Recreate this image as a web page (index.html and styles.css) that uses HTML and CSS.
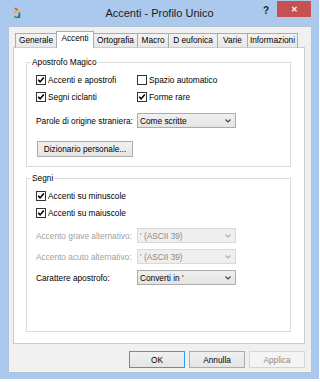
FILE: index.html
```html
<!DOCTYPE html>
<html lang="it">
<head>
    <meta charset="UTF-8">
    <meta name="viewport" content="width=device-width, initial-scale=1.0">
    <title>Accenti - Profilo Unico</title>
    <link rel="stylesheet" href="styles.css">
</head>
<body>
    <div class="window">
        <div class="titlebar">
            <svg class="app-icon" width="8" height="12" viewBox="0 0 8 12">
                <path d="M2 1 L4.5 3" stroke="#d83a2a" stroke-width="1.4" fill="none"/>
                <path d="M1.5 6.5 A2.6 2.6 0 1 1 6.5 7.5" stroke="#e8b020" stroke-width="1.6" fill="none"/>
                <path d="M6.5 7.5 A2.6 2.6 0 0 1 1.6 9" stroke="#2f9a3a" stroke-width="1.6" fill="none"/>
                <path d="M6.4 5.5 L6.4 11" stroke="#2b5fc0" stroke-width="1.5" fill="none"/>
            </svg>
            <span class="title">Accenti - Profilo Unico</span>
            <div class="caption-buttons">
                <span class="help">?</span>
                <span class="close">&#x2715;</span>
            </div>
        </div>

        <div class="client">
            <div class="tabs">
                <div class="tab tab-generale">Generale</div>
                <div class="tab tab-accenti active">Accenti</div>
                <div class="tab tab-ortografia">Ortografia</div>
                <div class="tab tab-macro">Macro</div>
                <div class="tab tab-eufonica">D eufonica</div>
                <div class="tab tab-varie">Varie</div>
                <div class="tab tab-info">Informazioni</div>
            </div>

            <div class="panel">
                <fieldset class="group group-apostrofo">
                    <legend>Apostrofo Magico</legend>
                    <div class="group-body">
                        <div class="row">
                            <label class="check col-left"><span class="box checked"></span>Accenti e apostrofi</label>
                            <label class="check"><span class="box"></span>Spazio automatico</label>
                        </div>
                        <div class="row">
                            <label class="check col-left"><span class="box checked"></span>Segni ciclanti</label>
                            <label class="check"><span class="box checked"></span>Forme rare</label>
                        </div>
                        <div class="row row-combo row-parole">
                            <span class="col-left">Parole di origine straniera:</span>
                            <div class="combo"><span>Come scritte</span><span class="arrow"></span></div>
                        </div>
                        <div class="row-button">
                            <div class="button button-diz">Dizionario personale...</div>
                        </div>
                    </div>
                </fieldset>

                <fieldset class="group group-segni">
                    <legend>Segni</legend>
                    <div class="group-body">
                        <div class="row">
                            <label class="check col-left"><span class="box checked"></span>Accenti su minuscole</label>
                        </div>
                        <div class="row">
                            <label class="check col-left"><span class="box checked"></span>Accenti su maiuscole</label>
                        </div>
                        <div class="row row-combo row-grave disabled">
                            <span class="col-left">Accento grave alternativo:</span>
                            <div class="combo"><span>' (ASCII 39)</span><span class="arrow"></span></div>
                        </div>
                        <div class="row row-combo disabled">
                            <span class="col-left">Accento acuto alternativo:</span>
                            <div class="combo"><span>' (ASCII 39)</span><span class="arrow"></span></div>
                        </div>
                        <div class="row row-combo">
                            <span class="col-left">Carattere apostrofo:</span>
                            <div class="combo"><span>Converti in '</span><span class="arrow"></span></div>
                        </div>
                    </div>
                </fieldset>
            </div>

            <div class="dialog-buttons">
                <div class="button default">OK</div>
                <div class="button">Annulla</div>
                <div class="button disabled">Applica</div>
            </div>
        </div>
    </div>
</body>
</html>
```

FILE: styles.css
```css
* {
    box-sizing: border-box;
}
body {
    margin: 0;
    background-color: #fff;
    font-family: "Liberation Sans", Arial, sans-serif;
    font-size: 8.3px;
    color: #000;
}
.window {
    width: 319px;
    height: 379px;
    background-color: #aac9ec;
}
.titlebar {
    height: 26px;
    display: grid;
    grid-template-columns: 1fr auto 1fr;
    align-items: center;
}
.app-icon {
    display: block;
    margin-left: 13px;
}
.title {
    font-size: 11px;
    color: #1b1b1b;
}
.caption-buttons {
    justify-self: end;
    align-self: start;
    display: flex;
    align-items: flex-start;
}
.help {
    font-weight: bold;
    font-size: 10px;
    line-height: 10px;
    margin-top: 6px;
    margin-right: 8px;
    color: #222;
}
.close {
    width: 34px;
    height: 16px;
    margin-top: 1px;
    margin-right: 8px;
    background-color: #c75050;
    color: #fff;
    font-size: 8px;
    font-weight: bold;
    display: flex;
    align-items: center;
    justify-content: center;
}
.client {
    margin: 0 7px 0 8px;
    height: 347px;
    background-color: #f0f0f0;
    border: 1px solid #b3c3d6;
    padding: 4px 6px 0 4px;
}
.tabs {
    display: flex;
    align-items: flex-end;
    height: 17px;
    margin-bottom: -1px;
    padding-left: 2px;
    position: relative;
    z-index: 1;
}
.tab {
    height: 15px;
    margin-left: -1px;
    border: 1px solid #acacac;
    border-bottom-color: #cccccc;
    background: linear-gradient(#f2f2f2, #e8e8e8);
    text-align: center;
    line-height: 13px;
    white-space: nowrap;
}
.tab:first-child {
    margin-left: 0;
}
.tab.active {
    height: 17px;
    background: #fff;
    border-bottom: none;
    z-index: 1;
}
.tab-generale { width: 42px; }
.tab-accenti { width: 38px; }
.tab-ortografia { width: 45px; }
.tab-macro { width: 32px; }
.tab-eufonica { width: 50px; }
.tab-varie { width: 31px; }
.tab-info { width: 51px; }
.panel {
    height: 297px;
    background-color: #fff;
    border: 1px solid #cccccc;
    padding-top: 9px;
}
.group {
    margin: 0 13px 0 12px;
    padding: 0;
    min-width: 0;
    border: 1px solid #dcdcdc;
}
.group legend {
    margin-left: 4px;
    padding: 0 1px;
    line-height: 11px;
}
.group-segni {
    margin-top: 6px;
}
.group-body {
    padding: 5px 0 9px 9px;
}
.group-segni .group-body {
    padding-bottom: 46px;
}
.row {
    display: flex;
    align-items: center;
    height: 14px;
    margin-bottom: 3px;
}
.row-combo {
    height: 15px;
    margin-top: 6px;
    margin-bottom: 0;
}
.row-parole {
    margin-top: 9px;
}
.row-grave {
    margin-top: 8px;
}
.col-left {
    width: 101px;
    flex-shrink: 0;
    white-space: nowrap;
}
.check {
    display: flex;
    align-items: center;
    white-space: nowrap;
}
.box {
    width: 10px;
    height: 10px;
    margin-right: 2px;
    border: 1px solid #333;
    background-color: #fff;
    flex-shrink: 0;
}
.box.checked {
    background: #fff url("data:image/svg+xml,%3Csvg xmlns='http://www.w3.org/2000/svg' width='8' height='8' viewBox='0 0 8 8'%3E%3Cpath d='M1.2 3.8 L3.1 5.9 L6.8 1.6' stroke='%23000' stroke-width='1.6' fill='none'/%3E%3C/svg%3E") center / 8px 8px no-repeat;
}
.combo {
    width: 99px;
    height: 15px;
    display: flex;
    align-items: center;
    justify-content: space-between;
    padding: 0 4px 0 2px;
    border: 1px solid #acacac;
    background: linear-gradient(#f0f0f0, #e4e4e4);
    white-space: nowrap;
}
.arrow {
    width: 6px;
    height: 4px;
    background: url("data:image/svg+xml,%3Csvg xmlns='http://www.w3.org/2000/svg' width='6' height='4' viewBox='0 0 6 4'%3E%3Cpath d='M0.5 0.5 L3 3 L5.5 0.5' stroke='%23404040' stroke-width='1.1' fill='none'/%3E%3C/svg%3E") no-repeat;
}
.disabled .col-left {
    color: #a0a0a0;
}
.disabled .combo {
    color: #8a8a8a;
    border-color: #d9d9d9;
    background: #efefef;
}
.disabled .arrow {
    opacity: 0.35;
}
.row-button {
    margin-top: 13px;
    padding-left: 1px;
}
.button {
    display: flex;
    align-items: center;
    justify-content: center;
    width: 56px;
    height: 17px;
    border: 1px solid #acacac;
    background: linear-gradient(#f0f0f0, #e5e5e5);
    white-space: nowrap;
}
.button-diz {
    width: 96px;
    height: 16px;
}
.button.default {
    border-color: #3399ff;
}
.button.disabled {
    color: #8a8a8a;
    border-color: #d5d5d5;
    background: #f4f4f4;
}
.dialog-buttons {
    display: flex;
    justify-content: flex-end;
    gap: 4px;
    margin-top: 7px;
}
```
